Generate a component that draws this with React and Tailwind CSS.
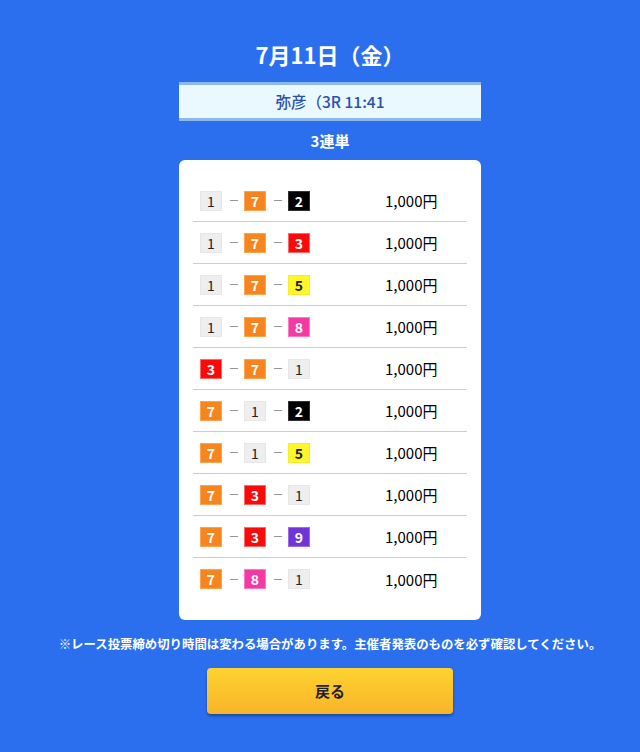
const badgeStyles = {
  1: "bg-[#eeeeee] text-[#222222] border-[#e6e6e6] font-normal",
  2: "bg-black text-white border-[#333333]",
  3: "bg-[#fb0a0a] text-white border-[#ff6666]",
  5: "bg-[#fff62a] text-[#222222] border-[#f5ec30]",
  7: "bg-[#f6841f] text-white border-[#ffa24d]",
  8: "bg-[#f23aa5] text-white border-[#ff7ac6]",
  9: "bg-[#7035d8] text-white border-[#9a6ae8]",
};

const rows = [
  [1, 7, 2],
  [1, 7, 3],
  [1, 7, 5],
  [1, 7, 8],
  [3, 7, 1],
  [7, 1, 2],
  [7, 1, 5],
  [7, 3, 1],
  [7, 3, 9],
  [7, 8, 1],
];

function Badge({ n }) {
  return (
    <span
      className={`flex h-[20px] w-[22px] items-center justify-center border text-[14px] font-bold leading-none ${badgeStyles[n]}`}
    >
      {n}
    </span>
  );
}

function Dash() {
  return <span className="ml-[8px] mr-[6px] h-[1px] w-[8px] bg-[#999999]" />;
}

export default function App() {
  return (
    <div
      className="flex min-h-[752px] w-full flex-col items-center bg-[#2b6fef] pl-[20px] pt-[39px] text-white"
      style={{ fontFamily: '"Noto Sans CJK JP", "Noto Sans", sans-serif' }}
    >
      <h1 className="text-[22px] font-bold leading-[31px]">7月11日（金）</h1>
      <div className="mt-[12px] flex h-[39px] w-[302px] items-center justify-center border-y-[3px] border-[#8db9ea] bg-[#eaf8ff] text-[15.5px] font-medium text-[#2a52ad]">
        弥彦（3R 11:41
      </div>
      <div className="mt-[9px] text-[15px] font-bold leading-[22px]">3連単</div>
      <div className="mt-[8px] w-[302px] rounded-[6px] bg-white px-[14px] py-[20px] text-black">
        {rows.map((r, i) => (
          <div
            key={i}
            className={`flex h-[42px] items-center px-[7px] ${i < rows.length - 1 ? "border-b border-[#cccccc]" : ""}`}
          >
            <div className="flex items-center">
              <Badge n={r[0]} />
              <Dash />
              <Badge n={r[1]} />
              <Dash />
              <Badge n={r[2]} />
            </div>
            <div className="ml-[75px] pt-[2px] text-[15px]">1,000円</div>
          </div>
        ))}
      </div>
      <p className="mt-[15px] text-[12.4px] font-bold leading-[18px]">
        ※レース投票締め切り時間は変わる場合があります。主催者発表のものを必ず確認してください。
      </p>
      <button className="mt-[15px] flex h-[46px] w-[246px] items-center justify-center rounded-[4px] bg-gradient-to-b from-[#fdd330] to-[#f9b42a] text-[15px] font-bold text-[#222222] shadow-[0_2px_3px_rgba(0,0,0,0.35)]">
        戻る
      </button>
    </div>
  );
}
